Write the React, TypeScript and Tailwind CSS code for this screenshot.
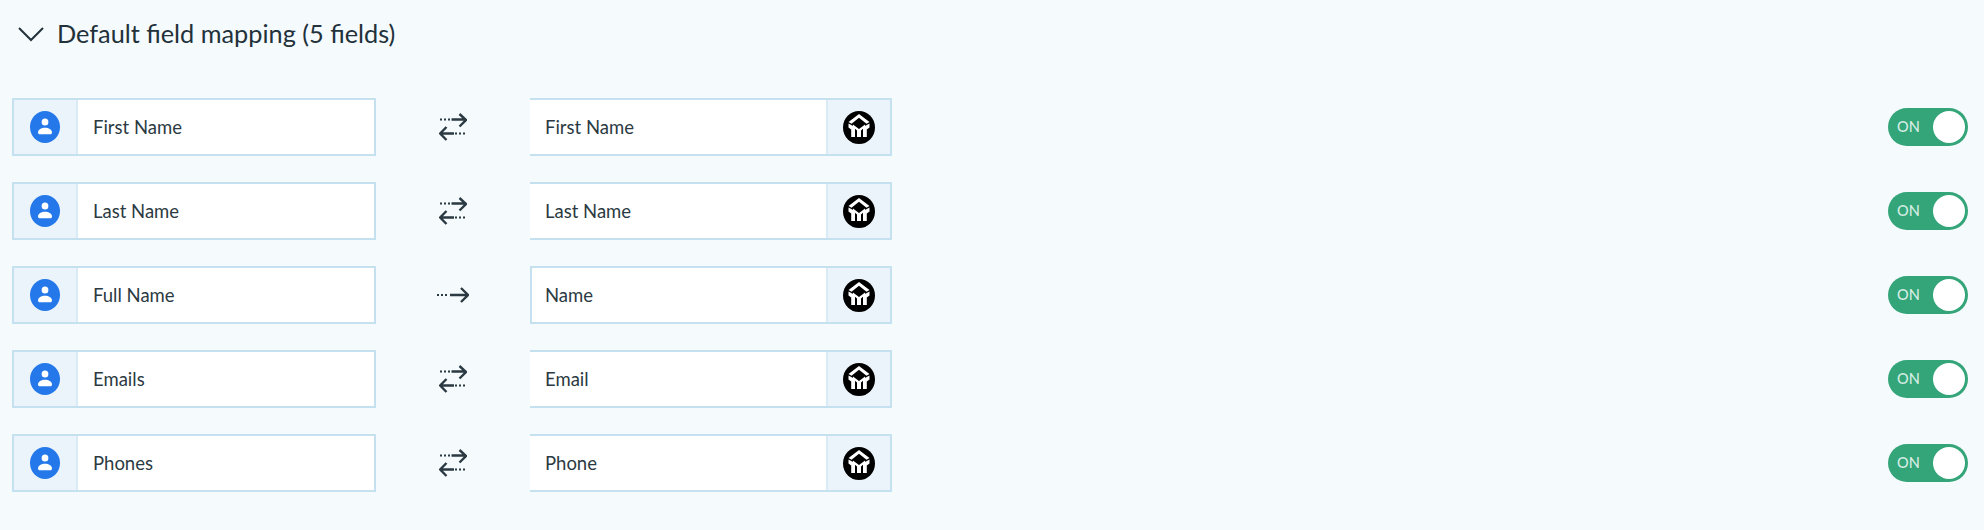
const rows = [
  { left: "First Name", right: "First Name", mode: "both" },
  { left: "Last Name", right: "Last Name", mode: "both" },
  { left: "Full Name", right: "Name", mode: "one" },
  { left: "Emails", right: "Email", mode: "both" },
  { left: "Phones", right: "Phone", mode: "both" },
];

function PersonIcon() {
  return (
    <svg width="30" height="32" viewBox="0 0 30 32">
      <ellipse cx="15" cy="16" rx="15" ry="16" fill="#2478ea" />
      <ellipse cx="15" cy="11" rx="3.4" ry="3.6" fill="#fff" />
      <path d="M8 21.5c0-2.8 3.4-4.8 7-4.8s7 2 7 4.8c0 1.1-.7 1.8-1.8 1.8H9.8c-1.1 0-1.8-.7-1.8-1.8z" fill="#fff" />
    </svg>
  );
}

function LogoIcon() {
  return (
    <svg width="32" height="33" viewBox="0 0 32 33">
      <ellipse cx="16" cy="16.5" rx="16" ry="16.5" fill="#000" />
      <path d="M16 3 L26.5 11 L23.5 12.8 L16 6.8 L8.5 12.8 L5.5 11 Z" fill="#fff" />
      <path d="M5.5 12.4 L12 16 L12 26 L8.2 26 L8.2 18.4 L5.5 16.6 Z" fill="#fff" />
      <path d="M26.5 12.4 L20 16 L20 26 L23.8 26 L23.8 18.4 L26.5 16.6 Z" fill="#fff" />
      <path d="M10 13.6 L16 18 L22 13.6 L22 16 L18 19.4 L18 26 L14 26 L14 19.4 L10 16 Z" fill="#fff" />
    </svg>
  );
}

function BothArrows() {
  return (
    <svg width="28" height="28" viewBox="0 0 28 28" fill="none" stroke="#2b3a42" strokeWidth="2.4">
      <path d="M1 6.5h10.5" strokeDasharray="2 2" strokeWidth="2" />
      <path d="M12.5 6.5h14M20.5 1l6.5 6-6.5 6.5" />
      <path d="M26 20.5H16" strokeDasharray="2 2" strokeWidth="2" />
      <path d="M15 20.5H1.5M7.5 14L1.2 20.5 7.5 27" />
    </svg>
  );
}

function OneArrow() {
  return (
    <svg width="32" height="16" viewBox="0 0 32 16" fill="none" stroke="#2b3a42" strokeWidth="2.4">
      <path d="M0 8h11" strokeDasharray="2 2" strokeWidth="2" />
      <path d="M13 8h17.5M24 1l7 7-7 7" />
    </svg>
  );
}

function Toggle() {
  return (
    <div className="flex h-[38px] w-[80px] items-center justify-between rounded-full bg-[#33a579] pl-[9px] pr-[3px]">
      <span className="pt-[1px] text-[14.5px] font-medium leading-none text-[#d5ede3]">ON</span>
      <span className="h-[32px] w-[32px] rounded-full bg-white" />
    </div>
  );
}

function Row({ left, right, mode }: { left: string; right: string; mode: string }) {
  const one = mode === "one";
  return (
    <div className="flex h-[58px] items-center">
      <div className="flex h-full w-[364px] border-2 border-[#c5e1ef] bg-white">
        <div className="flex w-[64px] shrink-0 items-center justify-center border-r-2 border-[#d9ecf5] bg-[#ebf4fb]">
          <PersonIcon />
        </div>
        <div className="flex items-center pl-[15px] pt-[2px] text-[18.5px] text-[#2b3a42]">{left}</div>
      </div>
      <div className="flex w-[154px] items-center justify-center">
        {one ? <OneArrow /> : <BothArrows />}
      </div>
      <div
        className={
          "flex h-full w-[362px] border-y-2 border-r-2 border-[#c5e1ef] bg-white " +
          (one ? "border-l-2" : "border-l-0")
        }
      >
        <div className={"flex flex-1 items-center pt-[2px] text-[18.5px] text-[#2b3a42] " + (one ? "pl-[13px]" : "pl-[15px]")}>
          {right}
        </div>
        <div className="flex w-[64px] shrink-0 items-center justify-center border-l-2 border-[#d9ecf5] bg-[#ebf4fb]">
          <LogoIcon />
        </div>
      </div>
      <div className="ml-auto">
        <Toggle />
      </div>
    </div>
  );
}

export default function App() {
  return (
    <div
      className="h-[530px] w-[1984px] overflow-hidden bg-[#f5fafd] pl-[12px] pr-[16px]"
      style={{ fontFamily: "Lato, 'Noto Sans', sans-serif" }}
    >
      <div className="flex h-[67px] items-center pl-[6px]">
        <svg width="26" height="16" viewBox="0 0 26 16" fill="none" stroke="#22313a" strokeWidth="2">
          <path d="M1 2l12 12L25 2" />
        </svg>
        <span className="ml-[13px] text-[25.3px] text-[#22313a]">Default field mapping (5 fields)</span>
      </div>
      <div className="mt-[31px] flex flex-col gap-[26px]">
        {rows.map((r) => (
          <Row key={r.left} {...r} />
        ))}
      </div>
    </div>
  );
}
